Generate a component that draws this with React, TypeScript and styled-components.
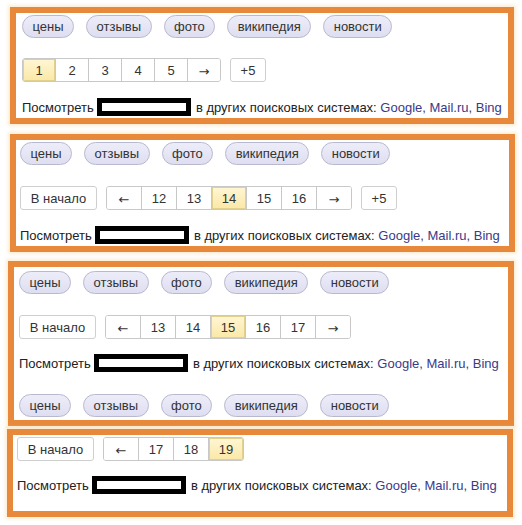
import styled, { createGlobalStyle } from "styled-components";

const GlobalStyle = createGlobalStyle`
  body {
    margin: 0;
    background: #ffffff;
    font-family: "Liberation Sans", Arial, sans-serif;
    font-size: 13px;
    color: #222222;
  }
`;

const Page = styled.div`
  padding-top: 7px;
  width: 522px;
  height: 525px;
  box-sizing: border-box;
`;

const Panel = styled.div<{
  $left: number;
  $width: number;
  $mt: number;
  $pt: number;
  $pb: number;
  $pl: number;
}>`
  margin-left: ${(p) => p.$left}px;
  margin-top: ${(p) => p.$mt}px;
  width: ${(p) => p.$width}px;
  box-sizing: border-box;
  border: 6px solid #e8883a;
  box-shadow: 0 0 3px 2px rgba(250, 222, 176, 0.55);
  background: #ffffff;
  padding: ${(p) => p.$pt}px 6px ${(p) => p.$pb}px ${(p) => p.$pl}px;
  display: flex;
  flex-direction: column;
`;

const ChipRow = styled.div<{ $mt?: number }>`
  display: flex;
  gap: 12px;
  margin-top: ${(p) => p.$mt ?? 0}px;
`;

const Chip = styled.span`
  height: 23px;
  box-sizing: border-box;
  display: inline-flex;
  align-items: center;
  padding: 0 9.5px;
  border: 1px solid #b8b8cf;
  border-radius: 12px;
  background: linear-gradient(#ededf9, #dedef1);
  color: #333333;
`;

const PagerRow = styled.div<{ $mt?: number }>`
  display: flex;
  align-items: center;
  gap: 9px;
  margin-top: ${(p) => p.$mt ?? 0}px;
`;

const Button = styled.span<{ $w: number }>`
  width: ${(p) => p.$w}px;
  height: 24px;
  box-sizing: border-box;
  display: inline-flex;
  align-items: center;
  justify-content: center;
  border: 1px solid #cfcfcf;
  border-radius: 3px;
  background: #ffffff;
  color: #333333;
`;

const Pager = styled.div`
  display: flex;
  height: 24px;
  box-sizing: border-box;
  border: 1px solid #c8c8c8;
  border-radius: 3px;
  overflow: hidden;
`;

const Cell = styled.span<{ $w: number; $active?: boolean }>`
  width: ${(p) => p.$w}px;
  display: inline-flex;
  align-items: center;
  justify-content: center;
  color: #333333;
  background: ${(p) =>
    p.$active ? "linear-gradient(#fff6d4, #fbe8a6)" : "#ffffff"};
  box-shadow: ${(p) => (p.$active ? "inset 0 0 0 1px #e2d08e" : "none")};
  & + & {
    border-left: 1px solid #c8c8c8;
  }
`;

const Arrow = styled.span`
  font-family: "DejaVu Sans", sans-serif;
  font-size: 13px;
  padding-top: 2px;
`;

const TextLine = styled.div<{ $mt: number }>`
  margin-top: ${(p) => p.$mt}px;
  height: 18px;
  display: flex;
  align-items: center;
  white-space: pre;
  color: #222222;
`;

const Redacted = styled.span`
  display: inline-block;
  width: 94px;
  height: 18px;
  box-sizing: border-box;
  border: 5px solid #000000;
  background: #ffffff;
  margin: 0 1px 0 0;
`;

const Engine = styled.a`
  color: #3a3a8a;
  text-decoration: none;
`;

const chips = ["цены", "отзывы", "фото", "википедия", "новости"];

function Chips({ mt }: { mt?: number }) {
  return (
    <ChipRow $mt={mt}>
      {chips.map((c) => (
        <Chip key={c}>{c}</Chip>
      ))}
    </ChipRow>
  );
}

function Elsewhere({ mt }: { mt: number }) {
  return (
    <TextLine $mt={mt}>
      {"Посмотреть "}
      <Redacted />
      {" в других поисковых системах: "}
      <Engine href="#">Google</Engine>
      <Engine as="span">, </Engine>
      <Engine href="#">Mail.ru</Engine>
      <Engine as="span">, </Engine>
      <Engine href="#">Bing</Engine>
    </TextLine>
  );
}

interface PagingProps {
  pages: string[];
  active: string;
  cell: number;
  start?: boolean;
  more?: boolean;
  mt?: number;
}

function Paging({ pages, active, cell, start, more, mt }: PagingProps) {
  return (
    <PagerRow $mt={mt}>
      {start && <Button $w={77}>В начало</Button>}
      <Pager>
        {pages.map((p) => (
          <Cell key={p} $w={cell} $active={p === active}>
            {p === "←" || p === "→" ? <Arrow>{p}</Arrow> : p}
          </Cell>
        ))}
      </Pager>
      {more && <Button $w={36}>+5</Button>}
    </PagerRow>
  );
}

export default function App() {
  return (
    <>
      <GlobalStyle />
      <Page>
        <Panel $left={10} $width={504} $mt={0} $pt={2} $pb={2} $pl={6}>
          <Chips />
          <Paging
            mt={20}
            cell={32}
            pages={["1", "2", "3", "4", "5", "→"]}
            active="1"
            more
          />
          <Elsewhere mt={16} />
        </Panel>

        <Panel $left={10} $width={505} $mt={10} $pt={2} $pb={2} $pl={4}>
          <Chips />
          <Paging
            mt={21}
            cell={34}
            start
            more
            pages={["←", "12", "13", "14", "15", "16", "→"]}
            active="14"
          />
          <Elsewhere mt={16} />
        </Panel>

        <Panel $left={8} $width={506} $mt={9} $pt={4} $pb={3} $pl={5}>
          <Chips />
          <Paging
            mt={21}
            cell={34}
            start
            pages={["←", "13", "14", "15", "16", "17", "→"]}
            active="15"
          />
          <Elsewhere mt={15} />
          <Chips mt={22} />
        </Panel>

        <Panel $left={7} $width={506} $mt={3} $pt={2} $pb={17} $pl={4}>
          <Paging
            cell={34}
            start
            pages={["←", "17", "18", "19"]}
            active="19"
          />
          <Elsewhere mt={15} />
        </Panel>
      </Page>
    </>
  );
}
